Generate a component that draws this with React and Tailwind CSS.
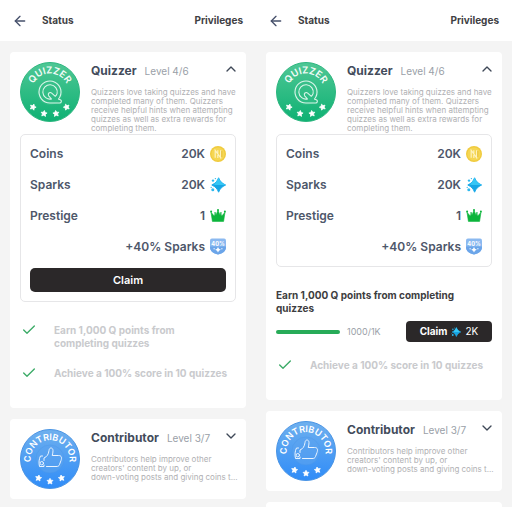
import { ArrowLeft, Check, ChevronDown, ChevronUp } from "lucide-react";

// --- Icons ---
const CoinIcon = () => (
  <svg viewBox="0 0 16 16" className="h-4 w-4" aria-hidden="true">
    <circle cx="8" cy="8" r="8" fill="#f0cb3e" />
    <circle cx="8" cy="8" r="6.6" fill="#f5d653" />
    <path d="M5.2 11.8V4.400l5.400 7.200V4.200M7.800 4.300v3M7.800 9v3" fill="none" stroke="#fdf2be" strokeWidth="1.200" />
    <path d="M11.800 5v6" stroke="#e4b92f" strokeWidth="0.800" />
  </svg>
);

const SparkIcon = ({ className = "h-4 w-4" }) => (
  <svg viewBox="0 0 16 16" className={className} aria-hidden="true">
    <path d="M8.600 .8c1.400 3.600 3.200 5.400 7 7.200-3.800 1.800-5.600 3.600-7 7.200C7.200 11.600 5.600 9.800 1.800 8 5.600 6.200 7.200 4.400 8.600.8z" fill="#17a5e4" stroke="#1facea" strokeWidth="1" strokeLinejoin="round" />
    <path d="M8.600 .8c1.400 3.600 3.200 5.400 7 7.200H4z" fill="#35c6f5" />
    <circle cx="3" cy="3.600" r="1.200" fill="#2fb9ee" />
    <circle cx="5.400" cy="1.600" r=".7" fill="#2fb9ee" />
    <circle cx="2.800" cy="12.800" r="1.500" fill="#2fb9ee" />
    <circle cx="1.200" cy="10.400" r=".6" fill="#2fb9ee" />
  </svg>
);

const CrownIcon = () => (
  <svg viewBox="0 0 16 16" className="h-4 w-4" aria-hidden="true">
    <path
      d="M2.400 13.400L1 4.200l2.800 3.400.9.200.3-3.800.9 3.300L8 2.200l2.100 5.100.9-3.300.3 3.800.9-.2L15 4.200l-1.400 9.200z"
      fill="#0db53c"
      stroke="#0db53c"
      strokeWidth=".6"
      strokeLinejoin="round"
    />
    <circle cx="1.100" cy="3.600" r="1" fill="#0db53c" />
    <circle cx="8" cy="1.900" r="1" fill="#0db53c" />
    <circle cx="14.900" cy="3.600" r="1" fill="#0db53c" />
  </svg>
);

const BoostIcon = () => (
  <svg viewBox="0 0 17 17" className="h-[17px] w-4" aria-hidden="true">
    <path d="M2 0h13a2 2 0 0 1 2 2v7c0 4.500-3.500 7-8.500 8C3.500 16 0 13.500 0 9V2a2 2 0 0 1 2-2z" fill="#8bb9f0" />
    <path d="M0 8.500h17V9c0 4.500-3.500 7-8.500 8C3.500 16 0 13.500 0 9z" fill="#6ba5e9" />
    <text x="8.500" y="8" textAnchor="middle" fontSize="6" fontWeight="700" fill="#fff" fontFamily="Inter, sans-serif">40%</text>
    <path d="M8.500 9l1 2 2 1-2 1-1 2-1-2-2-1 2-1z" fill="#fff" />
    <circle cx="4.400" cy="11" r=".8" fill="#dcebfc" />
    <circle cx="12.600" cy="11" r=".8" fill="#dcebfc" />
  </svg>
);

const Star = ({ x, y, r = 0 }) => (
  <path
    transform={`translate(${x} ${y}) rotate(${r})`}
    d="M0-3L1-1.100 3-.9 1.500.6 1.900 2.700 0 1.700-1.900 2.700-1.500.6-3-.9-1-1.100z"
    fill="#fff"
    stroke="#fff"
    strokeWidth=".7"
    strokeLinejoin="round"
  />
);

const QuizzerBadge = ({ id }) => (
  <svg viewBox="0 0 60 60" className="h-15 w-15 shrink-0" role="img" aria-label="Quizzer badge">
    <defs>
      <linearGradient id={`${id}-fill`} x1="0" y1="0" x2="0" y2="1">
        <stop offset="0" stopColor="#4fc795" />
        <stop offset="1" stopColor="#0eb173" />
      </linearGradient>
      <path id={`${id}-arc`} d="M11.500 30a18.500 18.500 0 0 1 37 0" />
    </defs>
    <circle cx="30" cy="30" r="29.500" fill={`url(#${id}-fill)`} stroke="#2db67f" />
    <circle cx="30" cy="30" r="13" fill="#38bf8a" opacity=".5" />
    <text fontSize="9.500" fontWeight="600" fill="#f2fbf7" fontFamily="Inter, sans-serif">
      <textPath href={`#${id}-arc`} startOffset="50%" textAnchor="middle">QUIZZER</textPath>
    </text>
    <g fill="none" stroke="#dcf5ea" strokeWidth="1.100" strokeLinejoin="round" strokeLinecap="round">
      <path d="M38.500 37A11 11 0 1 0 30 41h9.500c2.300 0 2.300-2.700.8-3.200-.8-.2-1.300-.4-1.800-.8z" />
      <path d="M31.500 37a7.200 7.200 0 1 1 5.600-5.600c-.3 1.200-.8 2.100-1.800 2.900l-3.600-3.200c-2-1.600-4.300.4-3 2.700z" />
    </g>
    <Star x={13} y={45} r={20} />
    <Star x={24} y={51.500} r={8} />
    <Star x={36} y={51.500} r={-8} />
    <Star x={46.500} y={45} r={-20} />
  </svg>
);

const ContributorBadge = ({ id }) => (
  <svg viewBox="0 0 60 60" className="h-15 w-15 shrink-0" role="img" aria-label="Contributor badge">
    <defs>
      <linearGradient id={`${id}-fill`} x1="0" y1="0" x2="0" y2="1">
        <stop offset="0" stopColor="#6fb0ee" />
        <stop offset="1" stopColor="#2f8cf8" />
      </linearGradient>
      <path id={`${id}-arc`} d="M10.800 34a19.500 19.500 0 1 1 38.400 0" />
    </defs>
    <circle cx="30" cy="30" r="29.500" fill={`url(#${id}-fill)`} stroke="#4a94e4" />
    <circle cx="30" cy="30" r="14" fill="#5ba3f0" stroke="#4c97e8" strokeWidth=".6" opacity=".6" />
    <text fontSize="9" fontWeight="600" fill="#fff" fontFamily="Inter, sans-serif">
      <textPath href={`#${id}-arc`} startOffset="50%" textAnchor="middle">CONTRIBUTOR</textPath>
    </text>
    <g fill="none" stroke="#eaf4ff" strokeWidth="1" strokeLinejoin="round" strokeLinecap="round">
      <path d="M24 31.500V29c3-1.300 4.500-3.500 5-7.500.3-3.500 4-3.300 4 .2 0 1.600-.3 3.200-.8 4.800h6.500c3 0 3.300 2.500 2.300 5l-1.500 4c-.6 1.800-1.600 2-3.500 2h-9.500" />
      <path d="M22.500 27h-2c-1.500 3-1.900 6.500-1 10.500h4.500V36" />
      <circle cx="21.800" cy="34.200" r="1.700" />
    </g>
    <Star x={18.500} y={49} r={10} />
    <Star x={30} y={52.300} />
    <Star x={41.500} y={49} r={-10} />
  </svg>
);

// --- Data ---
const rewards = [
  { label: "Coins", value: "20K", Icon: CoinIcon },
  { label: "Sparks", value: "20K", Icon: SparkIcon },
  { label: "Prestige", value: "1", Icon: CrownIcon },
  { label: "", value: "+40% Sparks", Icon: BoostIcon },
];

// --- Card pieces ---
function StatusHeader({ badge, name, level, open, children }) {
  const Chevron = open ? ChevronUp : ChevronDown;

  return (
    <div className="flex h-15 gap-[11px]">
      {badge}
      <div className="min-w-0 flex-1">
        <div className="flex h-[18px] items-center">
          <h2 className="text-[12px] font-bold text-[#434c5b]">{name}</h2>
          <span className="ml-2 text-[10px] text-[#9a9fa8]">{level}</span>
          <button type="button" aria-label={`Toggle ${name}`} aria-expanded={open} className="-mr-[3px] mb-1 ml-auto">
            <Chevron size={16} strokeWidth={2} className="text-[#3f4857]" />
          </button>
        </div>
        <p className="mt-2 text-[8px] leading-[9px] text-[#b0b0b3]">{children}</p>
      </div>
    </div>
  );
}

function RewardBox({ claimable }) {
  return (
    <div className="mt-3 rounded-[5px] border border-[#e6e6e8] px-[9px] pt-[3px] pb-1">
      {rewards.map(({ label, value, Icon }) => (
        <div key={value + label} className="flex h-[31px] items-center justify-between text-[12px] font-semibold text-[#4e576a]">
          <span>{label}</span>
          <span className="flex items-center gap-[5px]">
            {value}
            <Icon />
          </span>
        </div>
      ))}
      {claimable && (
        <button type="button" className="mt-[6px] mb-[5px] block h-6 w-full rounded-[5px] bg-[#2b2829] text-[11px] font-semibold text-white">
          Claim
        </button>
      )}
    </div>
  );
}

function DoneTask({ children }) {
  return (
    <li className="flex gap-[17px] pl-px text-[10px] leading-[13px] font-bold text-[#c9cacd]">
      <Check size={16} strokeWidth={2} className="-my-0.5 shrink-0 text-[#3bab67]" />
      <span className="flex-1">{children}</span>
    </li>
  );
}

function ClaimTask() {
  return (
    <li>
      <p className="text-[10px] leading-[13px] font-bold text-[#3d3d40]">
        Earn 1,000 Q points from completing quizzes
      </p>
      <div className="mt-[6px] flex h-[21px] items-center">
        <div
          role="progressbar"
          aria-label="Q points"
          aria-valuenow={1000}
          aria-valuemax={1000}
          className="h-1 w-16 rounded-full bg-[#27ab58]"
        />
        <span className="ml-[7px] text-[9px] text-[#9a9fa8]">1000/1K</span>
        <button type="button" className="ml-auto flex h-full w-[86px] items-center justify-center gap-1 rounded-[4px] bg-[#2b2829] text-[10px] text-white">
          <span className="font-bold">Claim</span>
          <SparkIcon className="h-[10px] w-[10px]" />
          2K
        </button>
      </div>
    </li>
  );
}

function StatusScreen({ id, claimed }) {
  return (
    <div className="flex min-w-0 flex-col overflow-hidden">
      <header className="flex h-[41px] shrink-0 items-center bg-white px-[13px] text-[10px] font-bold text-[#404043]">
        <button type="button" aria-label="Back" className="-ml-px">
          <ArrowLeft size={16} strokeWidth={2} className="text-[#46506b]" />
        </button>
        <h1 className="ml-[14px]">Status</h1>
        <a href="#privileges" className="ml-auto">Privileges</a>
      </header>

      <main className="flex min-h-0 flex-1 flex-col gap-[11px] overflow-hidden bg-[#f4f4f4] px-[10px] pt-[11px]">
        <section className="shrink-0 rounded-[4px] bg-white p-[10px] pb-7">
          <StatusHeader badge={<QuizzerBadge id={`${id}-quizzer`} />} name="Quizzer" level="Level 4/6" open>
            Quizzers love taking quizzes and have completed many of them. Quizzers receive helpful hints when attempting quizzes as well as extra rewards for completing them.
          </StatusHeader>
          <RewardBox claimable={claimed} />
          <ul className="mt-[22px] flex flex-col gap-[17px]">
            {claimed ? (
              <DoneTask>
                Earn 1,000 Q points from
                <br />
                completing quizzes
              </DoneTask>
            ) : (
              <ClaimTask />
            )}
            <DoneTask>Achieve a 100% score in 10 quizzes</DoneTask>
          </ul>
        </section>

        <section className="shrink-0 rounded-[4px] bg-white p-[10px]">
          <StatusHeader badge={<ContributorBadge id={`${id}-contributor`} />} name="Contributor" level="Level 3/7" open={false}>
            Contributors help improve other
            <br />
            creators' content by up, or
            <br />
            <span className="whitespace-nowrap">down-voting posts and giving coins t...</span>
          </StatusHeader>
        </section>

        <section className="h-20 shrink-0 rounded-[4px] bg-white" />
      </main>
      <footer className="h-1 shrink-0 bg-white" />
    </div>
  );
}

export default function App() {
  return (
    <div className="grid h-screen grid-cols-2 bg-white font-['Inter',sans-serif]">
      <StatusScreen id="left" claimed />
      <StatusScreen id="right" claimed={false} />
    </div>
  );
}
